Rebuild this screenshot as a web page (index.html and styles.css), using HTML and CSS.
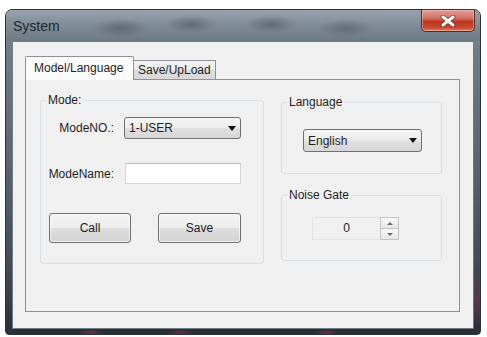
FILE: index.html
```html
<!DOCTYPE html>
<html lang="en">
<head>
<meta charset="utf-8">
<title>System</title>
<link rel="stylesheet" href="styles.css">
</head>
<body>
<div class="window">
  <div class="titlebar">
    <span class="title">System</span>
    <div class="close">
      <svg width="16" height="12" viewBox="0 0 16 12">
        <path d="M3 2 L13 10 M13 2 L3 10" stroke="#3a1010" stroke-width="4.8" stroke-linecap="round" fill="none" opacity="0.55"/>
        <path d="M3 2 L13 10 M13 2 L3 10" stroke="#ffffff" stroke-width="3" stroke-linecap="round" fill="none"/>
      </svg>
    </div>
  </div>
  <div class="client">
    <div class="tabs">
      <div class="tab active">Model/Language</div>
      <div class="tab">Save/UpLoad</div>
    </div>
    <div class="panel">
      <fieldset class="group mode">
        <legend>Mode:</legend>
        <div class="form">
          <span class="label">ModeNO.:</span>
          <div class="combo wide"><span>1-USER</span><span class="arrow"></span></div>
          <span class="label">ModeName:</span>
          <div class="textbox"></div>
        </div>
        <div class="buttons">
          <div class="btn call">Call</div>
          <div class="btn save">Save</div>
        </div>
      </fieldset>
      <div class="right">
        <fieldset class="group lang">
          <legend>Language</legend>
          <div class="combo narrow"><span>English</span><span class="arrow"></span></div>
        </fieldset>
        <fieldset class="group noise">
          <legend>Noise Gate</legend>
          <div class="spin">
            <div class="spin-value">0</div>
            <div class="spin-btns">
              <div class="spin-btn"><span class="tri up"></span></div>
              <div class="spin-btn"><span class="tri down"></span></div>
            </div>
          </div>
        </fieldset>
      </div>
    </div>
  </div>
</div>
</body>
</html>
```

FILE: styles.css
```css
* { box-sizing: border-box; }
html, body { margin: 0; padding: 0; }
body {
  width: 487px;
  height: 337px;
  overflow: hidden;
  background: #ffffff;
  padding: 9px 0 0 5px;
  font-family: "Liberation Sans", Arial, sans-serif;
  font-size: 12px;
  color: #1e1e1e;
}

.window {
  width: 476px;
  height: 326px;
  display: flex;
  flex-direction: column;
  border: 1px solid #2c353e;
  border-radius: 7px 7px 4px 4px;
  background:
    radial-gradient(ellipse 12px 4px at 85px 323px, rgba(170,50,70,0.6), rgba(170,50,70,0)),
    radial-gradient(ellipse 12px 4px at 175px 323px, rgba(170,50,70,0.5), rgba(170,50,70,0)),
    radial-gradient(ellipse 12px 4px at 320px 323px, rgba(170,50,70,0.5), rgba(170,50,70,0)),
    radial-gradient(ellipse 6px 30px at 472px 290px, rgba(130,45,70,0.6), rgba(130,45,70,0)),
    linear-gradient(180deg, #8c98a2 0%, #6f7d89 12%, #56636f 50%, #3b4651 85%, #262e36 100%);
}

.titlebar {
  height: 31px;
  display: flex;
  justify-content: space-between;
  align-items: flex-start;
  padding-left: 6px;
  padding-right: 5px;
  border-radius: 6px 6px 0 0;
  background:
    radial-gradient(ellipse 28px 9px at 115px 18px, rgba(35,45,55,0.35), rgba(35,45,55,0)),
    radial-gradient(ellipse 26px 9px at 185px 14px, rgba(35,45,55,0.35), rgba(35,45,55,0)),
    radial-gradient(ellipse 26px 9px at 265px 14px, rgba(35,45,55,0.35), rgba(35,45,55,0)),
    radial-gradient(ellipse 28px 9px at 340px 18px, rgba(35,45,55,0.3), rgba(35,45,55,0)),
    linear-gradient(180deg, #98a3ac 0%, #838f9a 40%, #6d7a86 100%);
}

.title {
  align-self: center;
  padding-left: 1px;
  font-size: 14px;
  line-height: 16px;
  color: #22282d;
}

.close {
  width: 54px;
  height: 22px;
  display: flex;
  align-items: center;
  justify-content: center;
  border: 1px solid #5a2a26;
  border-top: none;
  border-radius: 0 0 5px 5px;
  background: linear-gradient(180deg, #e0a097 0%, #d07060 40%, #c1351f 55%, #c84a30 85%, #d88a70 100%);
  box-shadow: inset 0 0 0 1px rgba(255,200,190,0.45);
}

.client {
  flex: 1;
  margin: 0 6px 5px 6px;
  border: 1px solid #6f7a84;
  background: #f0f0f0;
  padding: 14px 0 0 12px;
}

.tabs {
  display: flex;
  align-items: flex-end;
  height: 23px;
  position: relative;
  z-index: 1;
}

.tab {
  height: 19px;
  width: 82px;
  padding-left: 4px;
  line-height: 18px;
  border: 1px solid #8d9199;
  border-left: none;
  border-bottom: none;
  background: linear-gradient(180deg, #f2f2f2 0%, #ebebeb 50%, #dddddd 51%, #d8d8d8 100%);
  white-space: nowrap;
}

.tab.active {
  width: 109px;
  height: 24px;
  margin-bottom: -1px;
  padding-left: 8px;
  line-height: 23px;
  border-left: 1px solid #8d9199;
  border-radius: 2px 2px 0 0;
  background: #fbfbfb;
}

.panel {
  width: 435px;
  height: 233px;
  border: 1px solid #8d9199;
  background: #f0f0f0;
  padding: 13px 0 0 14px;
  display: grid;
  grid-template-columns: 224px 161px;
  column-gap: 17px;
  align-items: start;
}

.group {
  margin: 0;
  padding: 0;
  border: 1px solid #d5dfe5;
  border-radius: 3px;
  min-width: 0;
}

.group legend {
  margin-left: 5px;
  padding: 0 2px;
  font-size: 12px;
  line-height: 14px;
}

.mode {
  padding-bottom: 20px;
}

.form {
  display: grid;
  grid-template-columns: 73px 117px;
  column-gap: 10px;
  row-gap: 24px;
  align-items: center;
  padding-top: 10px;
}

.label {
  text-align: right;
  white-space: nowrap;
}

.combo {
  display: flex;
  align-items: center;
  justify-content: space-between;
  border: 1px solid #707070;
  border-radius: 3px;
  padding: 0 4px 0 4px;
  background: linear-gradient(180deg, #f5f5f5 0%, #ececec 50%, #e0e0e0 51%, #d6d6d6 100%);
}

.combo.wide { height: 22px; }

.combo.narrow {
  height: 23px;
  width: 119px;
  margin: 20px 0 21px 21px;
}

.arrow {
  width: 0;
  height: 0;
  border-left: 4px solid transparent;
  border-right: 4px solid transparent;
  border-top: 5px solid #111;
}

.textbox {
  height: 21px;
  margin-left: 1px;
  background: #ffffff;
  border: 1px solid #d2d6db;
  border-top-color: #b8bcc2;
}

.buttons {
  display: flex;
  gap: 27px;
  margin-top: 29px;
  padding-left: 8px;
}

.btn {
  height: 30px;
  display: flex;
  align-items: center;
  justify-content: center;
  border: 1px solid #707070;
  border-radius: 3px;
  background: linear-gradient(180deg, #f4f4f4 0%, #ececec 50%, #dedede 51%, #d3d3d3 100%);
  box-shadow: inset 0 0 0 1px rgba(255,255,255,0.6);
}

.btn.call { width: 82px; }
.btn.save { width: 83px; }

.right {
  display: flex;
  flex-direction: column;
  margin-top: 2px;
}

.noise {
  margin-top: 14px;
}

.spin {
  display: flex;
  width: 87px;
  height: 23px;
  margin: 15px 0 20px 30px;
}

.spin-value {
  width: 68px;
  text-align: center;
  line-height: 21px;
  border: 1px solid #e2e2e2;
  border-right: none;
  background: #f0f0f0;
}

.spin-btns {
  width: 19px;
  display: flex;
  flex-direction: column;
}

.spin-btn {
  flex: 1;
  display: flex;
  align-items: center;
  justify-content: center;
  border: 1px solid #c4c4c4;
  background: linear-gradient(180deg, #f7f7f7, #e6e6e6);
}

.spin-btn + .spin-btn { border-top: none; }

.tri {
  width: 0;
  height: 0;
  border-left: 3px solid transparent;
  border-right: 3px solid transparent;
}

.tri.up { border-bottom: 3px solid #6a6a6a; }
.tri.down { border-top: 3px solid #6a6a6a; }
```
